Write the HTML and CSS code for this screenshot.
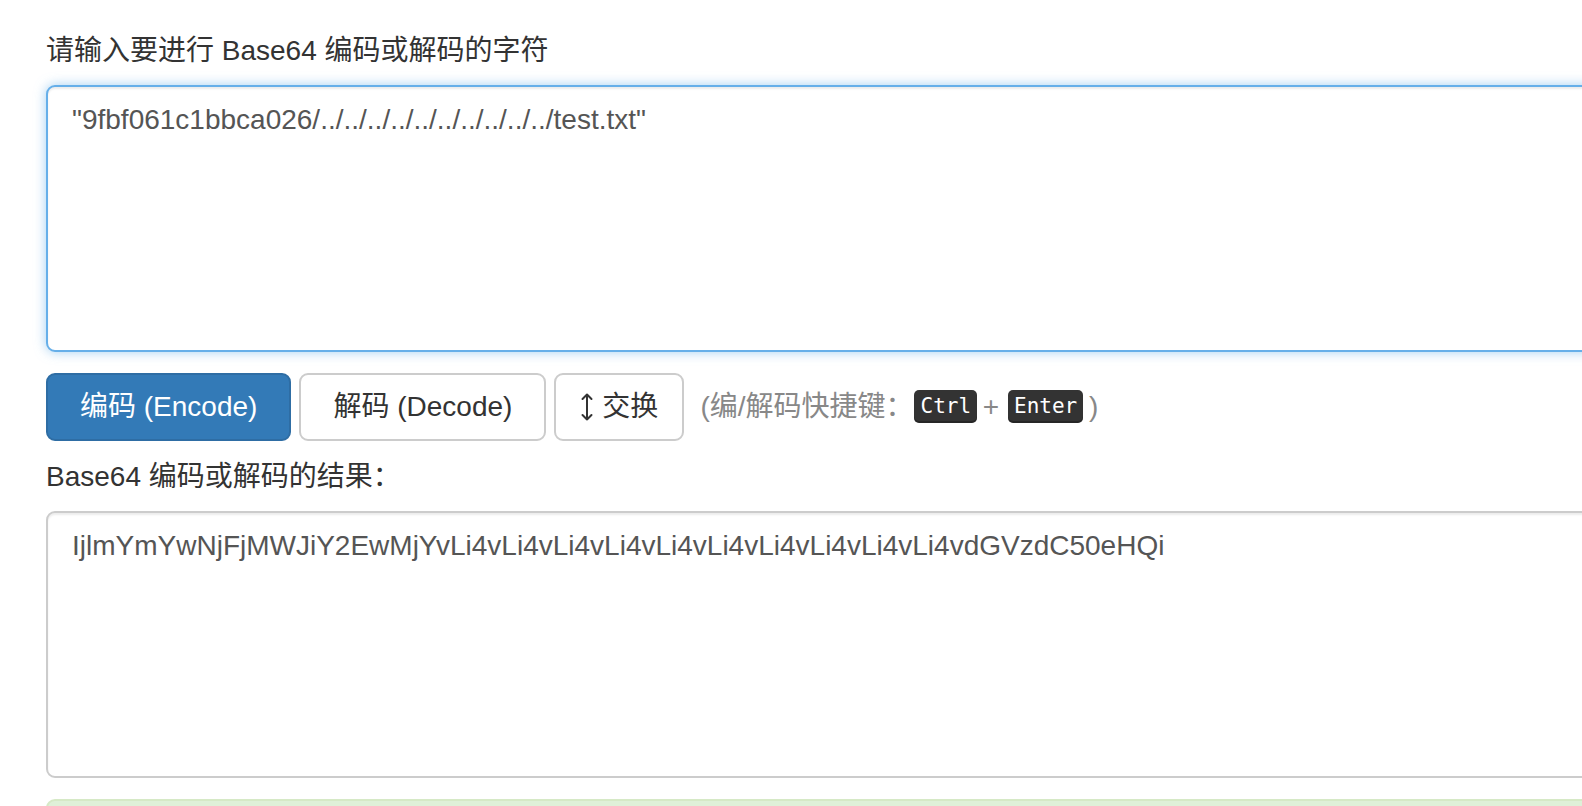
FILE: index.html
```html
<!DOCTYPE html>
<html lang="zh-CN">
<head>
    <meta charset="UTF-8">
    <meta name="viewport" content="width=device-width, initial-scale=1.0">
    <title>Base64 编码 / 解码</title>
    <link rel="stylesheet" href="styles.css">
</head>
<body>

    <div class="page">
        <!-- 输入 -->
        <label class="field-label" for="source">请输入要进行 Base64 编码或解码的字符</label>
        <textarea class="field field-focus" id="source">"9fbf061c1bbca026/../../../../../../../../../../test.txt"</textarea>

        <!-- 操作按钮 -->
        <div class="actions">
            <button class="btn btn-primary" id="encode">编码 (Encode)</button>
            <button class="btn" id="decode">解码 (Decode)</button>
            <button class="btn btn-swap" id="swap">
                <svg class="icon-swap" width="14" height="30" viewBox="0 0 14 30" aria-hidden="true">
                    <path d="M7 2.5V27.5M2.5 7L7 2.5L11.5 7M2.5 23L7 27.5L11.5 23" fill="none" stroke="#333" stroke-width="2" stroke-linecap="round" stroke-linejoin="round"/>
                </svg>交换
            </button>
            <span class="hint">(编/解码快捷键：<kbd>Ctrl</kbd> + <kbd>Enter</kbd> )</span>
        </div>

        <!-- 结果 -->
        <label class="field-label" for="result">Base64 编码或解码的结果：</label>
        <textarea class="field" id="result">IjlmYmYwNjFjMWJiY2EwMjYvLi4vLi4vLi4vLi4vLi4vLi4vLi4vLi4vLi4vLi4vdGVzdC50eHQi</textarea>

        <div class="alert"></div>
    </div>

</body>
</html>
```

FILE: styles.css
```css
html, body {
    overflow: hidden;
}
body {
    margin: 0;
    background: #fff;
    color: #333;
    font-family: "Liberation Sans", Arial, "Noto Sans CJK SC", sans-serif;
    font-size: 28px;
    line-height: 40px;
}
.page {
    padding: 31px 0 0 46px;
    width: 1600px;
    height: 775px;
    overflow: hidden;
}
.field-label {
    display: block;
    margin-bottom: 14px;
}
.field {
    display: block;
    box-sizing: border-box;
    width: 100%;
    height: 267px;
    padding: 14px 24px;
    border: 2px solid #ccc;
    border-radius: 9px;
    background: #fff;
    color: #555;
    font-family: inherit;
    font-size: 28px;
    line-height: 37px;
    box-shadow: inset 0 2px 2px rgba(0, 0, 0, 0.075);
    resize: none;
    outline: none;
}
.field-focus {
    border-color: #66afe9;
    box-shadow: inset 0 2px 2px rgba(0, 0, 0, 0.075), 0 0 12px rgba(102, 175, 233, 0.6);
}
.actions {
    display: flex;
    align-items: center;
    gap: 8px;
    margin: 21px 0 16px;
}
.btn {
    display: inline-flex;
    align-items: center;
    height: 68px;
    padding: 0 32px;
    border: 2px solid #ccc;
    border-radius: 9px;
    background: #fff;
    color: #333;
    font-family: inherit;
    font-size: 28px;
    line-height: 36px;
    cursor: pointer;
}
.btn-primary {
    background: #337ab7;
    border-color: #2e6da4;
    color: #fff;
}
.btn-swap {
    padding: 0 24px;
}
.icon-swap {
    margin-right: 8px;
}
.hint {
    margin-left: 8px;
    color: #888;
    white-space: nowrap;
}
.hint kbd {
    display: inline-block;
    height: 33px;
    margin: 0 -2px 0 1px;
    padding: 0 6px;
    border-radius: 5px;
    background: #333;
    color: #fff;
    font-family: "DejaVu Sans Mono", "Liberation Mono", monospace;
    font-size: 21px;
    line-height: 33px;
    vertical-align: 3px;
    box-shadow: inset 0 -2px 0 rgba(0, 0, 0, 0.25);
}
.alert {
    margin-top: 21px;
    height: 40px;
    border: 2px solid #d6e9c6;
    border-radius: 9px;
    background: #dff0d8;
}
```
